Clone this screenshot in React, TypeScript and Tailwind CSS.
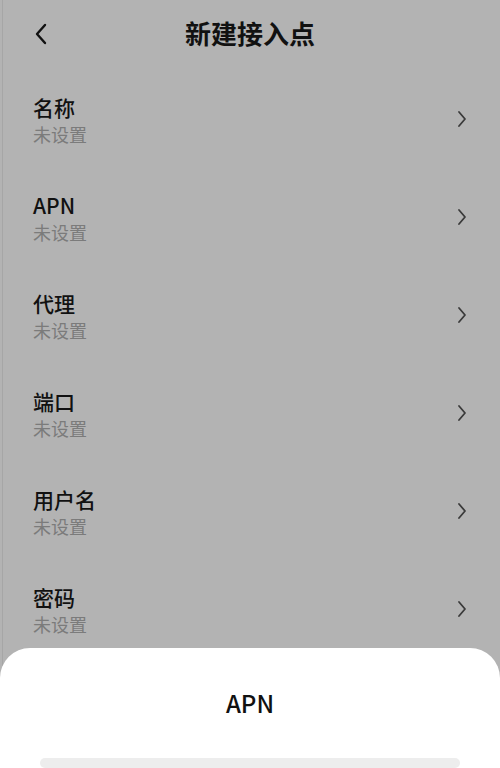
const rows = ["名称", "APN", "代理", "端口", "用户名", "密码"];

const font = { fontFamily: '"Noto Sans CJK SC", "Noto Sans", sans-serif' };

const Chevron = () => (
  <svg width="10" height="18" viewBox="0 0 10 18" fill="none">
    <path d="M2 2l6 7-6 7" stroke="#3a3a3a" strokeWidth="1.8" strokeLinecap="round" strokeLinejoin="round" />
  </svg>
);

export default function App() {
  return (
    <div className="relative w-[500px] h-[768px] overflow-hidden bg-[#b3b3b3]" style={font}>
      <div className="absolute left-[2px] top-0 bottom-0 w-px bg-[#a6a6a6]" />
      {/* Header */}
      <div className="relative h-[71px] flex items-start justify-center pt-[15px]">
        <svg className="absolute left-[33px] top-[23px]" width="16" height="22" viewBox="0 0 16 22" fill="none">
          <path d="M12 2L4 11l8 9" stroke="#111" strokeWidth="2.4" strokeLinecap="round" strokeLinejoin="round" />
        </svg>
        <span className="text-[26px] leading-[36px] font-bold text-[#111]">新建接入点</span>
      </div>

      {/* Rows */}
      <div className="flex flex-col">
        {rows.map((r) => (
          <div key={r} className="h-[98px] flex items-center justify-between pl-[33px] pr-[33px]">
            <div className="flex flex-col">
              <span className="text-[21px] leading-[26px] font-medium text-[#111]">{r}</span>
              <span className="mt-[2px] text-[18px] leading-[24px] text-[#7b7b7b]">未设置</span>
            </div>
            <div className="mb-[3px]">
              <Chevron />
            </div>
          </div>
        ))}
      </div>

      {/* Bottom sheet */}
      <div className="absolute left-0 right-0 top-[648px] bottom-0 bg-white rounded-t-[30px] flex flex-col items-center">
        <span className="mt-[39px] text-[24px] leading-[32px] font-medium text-[#111]">APN</span>
        <div className="mt-[39px] w-[420px] h-[60px] bg-[#ededed] rounded-[16px]" />
      </div>
    </div>
  );
}
